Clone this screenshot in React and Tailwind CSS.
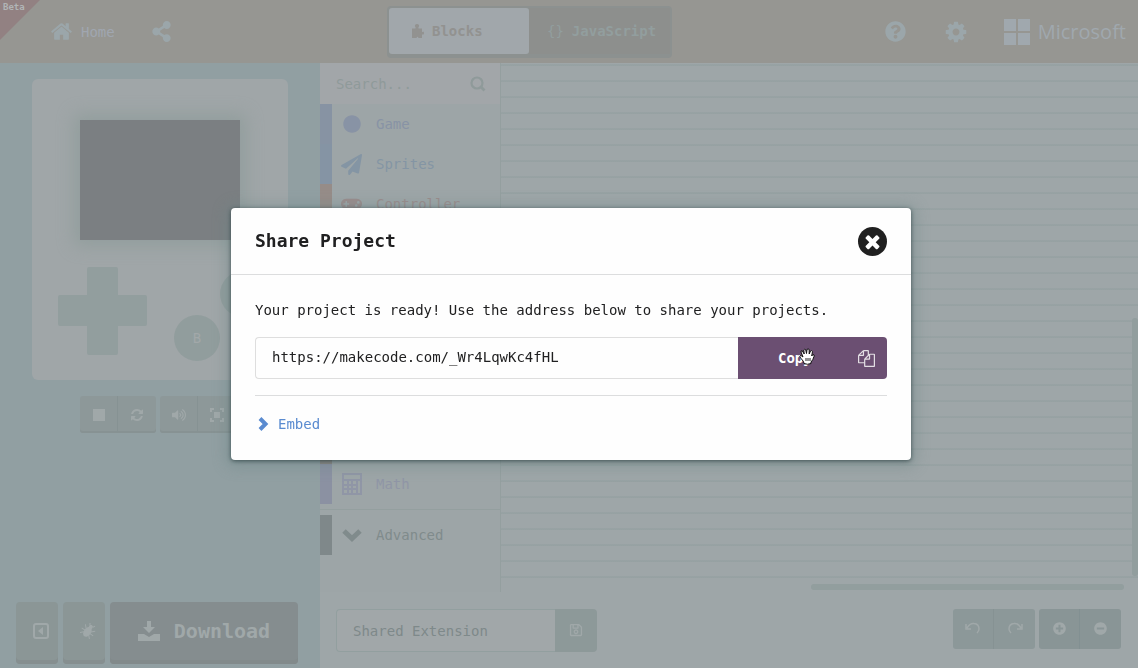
import React from "react";
import {
  FaShareAlt,
  FaQuestionCircle,
  FaCircle,
  FaPaperPlane,
  FaGamepad,
  FaVolumeUp,
  FaPlusCircle,
  FaMinusCircle,
  FaRegSave,
} from "react-icons/fa";

const HOME =
  "M1472 992v480q0 26-19 45t-45 19h-384v-384h-256v384h-384q-26 0-45-19t-19-45v-480q0-1 .5-3t.5-3l575-474 575 474q1 2 1 6zm223-69l-62 74q-8 9-21 11h-3q-13 0-21-7l-692-577-692 577q-12 8-24 7-13-2-21-11l-62-74q-8-10-7-23.5t11-21.5l719-599q32-26 76-26t76 26l244 204v-195q0-14 9-23t23-9h192q14 0 23 9t9 23v408l219 182q10 8 11 21.5t-7 23.5z";
const COG =
  "M1152 896q0-106-75-181t-181-75-181 75-75 181 75 181 181 75 181-75 75-181zm512-109v222q0 12-8 23t-20 13l-185 28q-19 54-39 91 35 50 107 138 10 12 10 25t-9 23q-27 37-99 108t-94 71q-12 0-26-9l-138-108q-44 23-91 38-16 136-29 186-7 28-36 28h-222q-14 0-24.5-8.5t-11.5-21.5l-28-184q-49-16-90-37l-141 107q-10 9-25 9-14 0-25-11-126-114-165-168-7-10-7-23 0-12 8-23 15-21 51-66.5t54-70.5q-27-50-41-99l-183-27q-13-2-21-12.5t-8-23.5v-222q0-12 8-23t19-13l186-28q14-46 39-92-40-57-107-138-10-12-10-24 0-10 9-23 26-36 98.500-107.500t94.500-71.500q13 0 26 10l138 107q44-23 91-38 16-136 29-186 7-28 36-28h222q14 0 24.500 8.500t11.500 21.500l28 184q49 16 90 37l142-107q9-9 24-9 13 0 25 10 129 119 165 170 7 8 7 22 0 12-8 23-15 21-51 66.500t-54 70.500q26 50 41 98l183 28q13 2 21 12.500t8 23.500z";
const REFRESH =
  "M1639 1056q0 5-1 7-64 268-268 434.5t-478 166.5q-146 0-282.5-55t-243.5-157l-129 129q-19 19-45 19t-45-19-19-45v-448q0-26 19-45t45-19h448q26 0 45 19t19 45-19 45l-137 137q71 66 161 102t187 36q134 0 250-65t186-179q11-17 53-117 8-23 30-23h192q13 0 22.5 9.5t9.5 22.5zm25-800v448q0 26-19 45t-45 19h-448q-26 0-45-19t-19-45 19-45l138-138q-148-137-349-137-134 0-250 65t-186 179q-11 17-53 117-8 23-30 23h-199q-13 0-22.5-9.5t-9.5-22.5v-7q65-268 270-434.5t480-166.5q146 0 284 55.5t245 156.5l130-129q19-19 45-19t45 19 19 45z";
const COPY =
  "M1696 384q40 0 68 28t28 68v1216q0 40-28 68t-68 28h-960q-40 0-68-28t-28-68v-288h-544q-40 0-68-28t-28-68v-672q0-40 20-88t48-76l408-408q28-28 76-48t88-20h416q40 0 68 28t28 68v328q68-40 128-40h416zm-544 213l-299 299h299v-299zm-640-384l-299 299h299v-299zm196 647l316-316v-416h-384v416q0 40-28 68t-68 28h-416v640h512v-256q0-40 20-88t48-76zm956 804v-1152h-384v416q0 40-28 68t-68 28h-416v640h896z";
const TIMES =
  "M1490 1322q0 40-28 68l-136 136q-28 28-68 28t-68-28l-294-294-294 294q-28 28-68 28t-68-28l-136-136q-28-28-28-68t28-68l294-294-294-294q-28-28-28-68t28-68l136-136q28-28 68-28t68 28l294 294 294-294q28-28 68-28t68 28l136 136q28 28 28 68t-28 68l-294 294 294 294q28 28 28 68z";

function Glyph({ d, className }) {
  return (
    <svg viewBox="0 0 1792 1792" fill="currentColor" className={className} aria-hidden="true">
      <path d={d} />
    </svg>
  );
}

function Header() {
  return (
    <header className="relative flex h-[63px] shrink-0 items-center justify-between bg-[#969692] text-[#9ba6aa]">
      <div className="flex items-center pl-[50px]">
        <svg className="absolute left-0 top-0 size-10" viewBox="0 0 40 40" aria-hidden="true">
          <path d="M0 0H40L0 40Z" fill="#928182" />
        </svg>
        <span className="absolute left-[3px] top-0 text-[9px] leading-[14px] font-bold text-[#b1b5b6]">Beta</span>
        <a href="#home" className="flex items-center gap-2">
          <Glyph d={HOME} className="size-[23px]" />
          <span className="text-[#a0a6b0]">Home</span>
        </a>
        <button aria-label="Share" className="ml-9">
          <FaShareAlt className="size-[21px]" />
        </button>
      </div>
      <div className="absolute inset-y-0 left-[387px] flex items-center">
        <div className="flex h-[52px] rounded-sm bg-[#8c9190] p-[2px] pb-1">
          <button className="flex w-[140px] items-center gap-2 rounded-[3px] bg-[#a1a7ab] pl-[22px] text-[#929290] font-bold">
            <svg viewBox="0 0 13 16" className="h-4 w-[13px]" fill="currentColor" aria-hidden="true">
              <path d="M1 5.500H4.500Q5 4.500 4 3.500Q3.500 1 6 1Q8.500 1 8 3.500Q7 4.500 7.500 5.500H11V8.500Q11.500 9.500 12.300 8.500Q13 8.500 13 10Q13 11.800 12.300 11.600Q11.500 10.800 11 12V15H7.500Q6.500 12.500 5.500 15H1Z" />
            </svg>
            Blocks
          </button>
          <button className="flex w-[141px] items-center gap-2 bg-[#8d8f8d] pl-[18px] text-[#929e9e] font-bold">
            <span className="font-normal" aria-hidden="true">{"{}"}</span>
            JavaScript
          </button>
        </div>
      </div>
      <div className="flex items-center pr-3">
        <button aria-label="Help">
          <FaQuestionCircle className="size-[21px]" />
        </button>
        <button aria-label="Settings" className="ml-[38px]">
          <Glyph d={COG} className="size-6" />
        </button>
        <div className="ml-9 flex items-center gap-2 text-[#a0a8ae]">
          <svg viewBox="0 0 26 26" className="size-[26px]" fill="currentColor" aria-hidden="true">
            <path d="M0 0h12v12H0zM14 0h12v12H14zM0 14h12v12H0zM14 14h12v12H14z" />
          </svg>
          <span className="font-['Open_Sans',sans-serif] text-[20px] leading-6 font-medium">Microsoft</span>
        </div>
      </div>
    </header>
  );
}

const simButton = "flex h-[37px] w-[38px] items-center justify-center text-[#a0a8a9]";

function Simulator() {
  return (
    <aside className="flex w-80 shrink-0 flex-col justify-between bg-[#919fa2] px-4 pt-4 pb-1">
      <div className="flex flex-col gap-4 px-4">
        <div className="h-[301px] rounded-md bg-[#a0a6a8] px-[26px] pt-[41px]">
          <div className="mx-[22px] h-[120px] bg-[#7b7f82] shadow-[0_0_16px_6px_#929e9d]" />
          <div className="flex items-start pt-[27px]">
            <svg viewBox="0 0 89 88" className="h-[88px] w-[89px] shrink-0" fill="#929e9e" aria-hidden="true">
              <path d="M31 0H58Q60 0 60 2V28H87Q89 28 89 30V57Q89 59 87 59H60V86Q60 88 58 88H31Q29 88 29 86V59H2Q0 59 0 57V30Q0 28 2 28H29V2Q29 0 31 0Z" />
            </svg>
            <div className="ml-[27px] mt-12 flex size-[46px] shrink-0 items-center justify-center rounded-full bg-[#919d9d] text-[#a2a8a9]">
              B
            </div>
            <div className="mt-1 size-[46px] shrink-0 rounded-full bg-[#919d9d]" />
          </div>
        </div>
        <div className="flex gap-1 pl-12">
          <div className="flex divide-x divide-[#869293] rounded-[3px] bg-[#8d9899] shadow-[inset_0_-2px_#879293]">
            <button aria-label="Stop" className={simButton}>
              <span className="size-3 bg-current" />
            </button>
            <button aria-label="Restart" className={simButton}>
              <Glyph d={REFRESH} className="size-[14px]" />
            </button>
          </div>
          <div className="flex divide-x divide-[#869293] rounded-[3px] bg-[#8d9899] shadow-[inset_0_-2px_#879293]">
            <button aria-label="Mute" className={simButton}>
              <FaVolumeUp className="size-[14px]" />
            </button>
            <button aria-label="Full screen" className={simButton}>
              <svg viewBox="0 0 14 14" className="size-[14px]" fill="none" stroke="currentColor" strokeWidth="2" aria-hidden="true">
                <path d="M1 4V1h3M10 1h3v3M13 10v3h-3M4 13H1v-3" />
                <path d="M4 4h6v6H4z" fill="currentColor" stroke="none" />
              </svg>
            </button>
          </div>
        </div>
      </div>
      <div className="flex h-[62px] gap-[5px] pr-1.5 text-[#a0a8a9]">
        <button aria-label="Collapse simulator" className="flex w-[42px] items-center justify-center rounded bg-[#8b9696] pl-2 pb-1 shadow-[inset_0_-4px_#868f90]">
          <svg viewBox="0 0 16 16" className="size-4" fill="none" stroke="currentColor" strokeWidth="2" aria-hidden="true">
            <rect x="1" y="1" width="14" height="14" rx="2" />
            <path d="M10 4v8L5 8z" fill="currentColor" stroke="none" />
          </svg>
        </button>
        <button aria-label="Debug" className="flex w-[42px] items-center justify-center rounded bg-[#8b9696] pl-2 pb-1 shadow-[inset_0_-4px_#868f90]">
          <svg viewBox="0 0 16 16" className="size-4" fill="currentColor" aria-hidden="true">
            <g transform="rotate(35 8 8)">
              <ellipse cx="8" cy="9" rx="3.6" ry="5.5" />
              <circle cx="8" cy="3" r="2" />
              <path d="M2 4l3 3M14 4l-3 3M1 9h14M2 14l3-3M14 14l-3-3M6 2L5 0M10 2l1-2" stroke="currentColor" strokeWidth="1" />
            </g>
          </svg>
        </button>
        <button className="flex flex-1 items-center justify-center gap-[14px] rounded bg-[#858d8f] pb-1 text-[20px] font-bold shadow-[inset_0_-4px_#828a8b]">
          <svg viewBox="0 0 22 20" className="h-5 w-[22px]" fill="currentColor" aria-hidden="true">
            <path d="M9 0h4v6h4l-6 6-6-6h4zM0 13h6l5 3 5-3h6v7H0z" />
          </svg>
          Download
        </button>
      </div>
    </aside>
  );
}

function Category({ bar, text, icon, children }) {
  return (
    <li className="flex h-10 items-center">
      <span className={"h-10 w-3 shrink-0 " + bar} />
      <a href={"#" + children} className={"flex items-center gap-[14px] pl-[9px] " + text}>
        <span className="flex w-[21px] justify-center">{icon}</span>
        {children}
      </a>
    </li>
  );
}

function Toolbox() {
  return (
    <nav className="w-[181px] shrink-0 border-r border-[#949f9f] bg-[#9da5a7]">
      <div className="flex h-[41px] items-center justify-between bg-[#a2a6a9] pr-[14px] pl-4 text-[#8f9a9a]">
        <input
          aria-label="Search"
          placeholder="Search..."
          className="w-28 bg-transparent placeholder:text-[#8f9a9a] outline-none"
        />
        <svg viewBox="0 0 16 16" className="size-4" fill="none" stroke="currentColor" aria-hidden="true">
          <circle cx="7" cy="7" r="5.5" strokeWidth="2.2" />
          <path d="M11 11l3.500 3.500" strokeWidth="2.800" />
        </svg>
      </div>
      <ul>
        <Category bar="bg-[#8793a3]" text="text-[#8893a5]" icon={<FaCircle className="size-[18px]" />}>
          Game
        </Category>
        <Category bar="bg-[#8594a4]" text="text-[#8495a4]" icon={<FaPaperPlane className="size-[21px]" />}>
          Sprites
        </Category>
        <Category bar="bg-[#968c88]" text="text-[#9a8c8c]" icon={<FaGamepad className="size-[22px]" />}>
          Controller
        </Category>
        <li className="h-[240px] w-3 bg-[#8d8681]" aria-hidden="true" />
        <Category
          bar="bg-[#8b91a2]"
          text="text-[#9096a6]"
          icon={
            <svg viewBox="0 0 20 22" className="h-[22px] w-5" fill="none" stroke="currentColor" strokeWidth="2" aria-hidden="true">
              <path d="M1 1h18v20H1zM1 7h18M1 12h14M1 16h14M6 7v14M10 7v14M15 7v14" />
            </svg>
          }
        >
          Math
        </Category>
        <li className="mt-[5px] mb-[5px] border-t border-[#949f9f]" aria-hidden="true" />
        <Category
          bar="bg-[#7f888a]"
          text="text-[#808b8c]"
          icon={
            <svg viewBox="0 0 20 14" className="h-[14px] w-5" fill="none" stroke="currentColor" strokeWidth="5" aria-hidden="true">
              <path d="M2 3l8 7.500L18 3" />
            </svg>
          }
        >
          Advanced
        </Category>
      </ul>
    </nav>
  );
}

function Workspace() {
  return (
    <div className="relative min-w-0 flex-1 bg-[#9ea6a8] bg-[linear-gradient(transparent_1px,#98a2a4_1px,#96a1a2_3px,transparent_3px)] bg-[size:16px_16px]">
      <div className="absolute right-0 top-[255px] bottom-4 w-1.5 rounded bg-[#929e9e]" />
      <div className="absolute right-[14px] bottom-0.5 h-1.5 w-[313px] rounded bg-[#929e9e]" />
    </div>
  );
}

const toolButton = "flex h-10 w-[41px] items-center justify-center pb-0.5 text-[#a0a8a9]";

function Arc({ flip }) {
  return (
    <svg viewBox="0 0 16 12" className={"h-3 w-4 " + (flip ? "-scale-x-100" : "")} fill="none" stroke="currentColor" strokeWidth="1.5" aria-hidden="true">
      <path d="M2 6Q5 1 9 1.500Q14 2 14 7Q14 9 12 11M1 2V7H6" />
    </svg>
  );
}

function EditorTools() {
  return (
    <footer className="flex h-[76px] shrink-0 items-start justify-between bg-[#9ea6a8] pt-[17px] pr-[17px] pl-4">
      <div className="flex h-[43px]">
        <input
          aria-label="Project name"
          defaultValue="Shared Extension"
          className="w-[219px] rounded-l border border-r-0 border-[#929f9f] bg-[#a1a7a9] px-4 text-[#7e898a] outline-none"
        />
        <button aria-label="Save" className="flex w-[42px] items-center justify-center rounded-r bg-[#8d9999] pb-0.5 text-[#a0a8a9]">
          <FaRegSave className="size-[14px]" />
        </button>
      </div>
      <div className="flex gap-1">
        <div className="flex divide-x divide-[#869293] rounded-[3px] bg-[#8c9899]">
          <button aria-label="Undo" className={toolButton}>
            <Arc />
          </button>
          <button aria-label="Redo" className={toolButton}>
            <Arc flip />
          </button>
        </div>
        <div className="flex divide-x divide-[#829092] rounded-[3px] bg-[#899596]">
          <button aria-label="Zoom in" className={toolButton}>
            <FaPlusCircle className="size-[13px]" />
          </button>
          <button aria-label="Zoom out" className={toolButton}>
            <FaMinusCircle className="size-[13px]" />
          </button>
        </div>
      </div>
    </footer>
  );
}

function ShareDialog() {
  return (
    <div className="fixed inset-0 flex items-center justify-center pl-1">
      <section
        role="dialog"
        aria-labelledby="share-title"
        className="w-[680px] max-w-full rounded-[4px] bg-[#fefefe] text-[#202021] shadow-[0_1px_4px_0_rgba(30,50,52,0.7),0_2px_14px_5px_rgba(105,132,132,0.4)]"
      >
        <div className="flex h-[67px] items-center justify-between border-b border-[#dcddde] px-6">
          <h1 id="share-title" className="text-[18px] leading-6 font-bold">
            Share Project
          </h1>
          <button aria-label="Close" className="flex size-[29px] items-center justify-center rounded-full bg-[#202020] text-white">
            <Glyph d={TIMES} className="size-[21px]" />
          </button>
        </div>
        <div className="p-6">
          <label htmlFor="share-url" className="block leading-[22px]">
            Your project is ready! Use the address below to share your projects.
          </label>
          <div className="mt-4 flex h-[42px]">
            <input
              id="share-url"
              readOnly
              value="https://makecode.com/_Wr4LqwKc4fHL"
              className="min-w-0 flex-1 rounded-l border border-r-0 border-[#dedede] px-4 pb-0.5 outline-none"
            />
            <button className="relative flex w-[149px] items-center justify-between rounded-r bg-[#6b4f72] pr-3 pl-10 font-bold text-white">
              Copy
              <Glyph d={COPY} className="size-[17px] text-[#e3dfe4]" />
              <svg viewBox="0 0 16 17" className="absolute left-[61px] top-[11px] h-[17px] w-4" aria-hidden="true">
                <path
                  d="M5 15.500L4.500 13.500Q2 10.500 .8 8.800Q.5 7.500 2 7.500L4 9L2 4Q1.800 2.500 3.200 2.700L5.200 6L4.800 2Q5.500 .7 6.700 1.700L7.500 5.500L8 1.500Q9 .3 10.200 1.500V6L11.500 3Q13 2 13.500 3.500L12.700 8L14 6.500Q15.700 6.500 15 8.500Q14 12 12 14V15.500Q8.500 17 5 15.500Z"
                  fill="#fff"
                  stroke="#111"
                  strokeWidth="1"
                />
                <path d="M7 10v3M9 10v3M11 10v3" stroke="#222" strokeWidth="1" />
              </svg>
            </button>
          </div>
          <div className="mt-4 border-t border-[#dcddde] pt-4">
            <button className="flex items-center gap-[9px] pl-[3px] leading-6 text-[#5a8bd0]">
              <svg viewBox="0 0 11 14" className="h-[14px] w-[11px]" fill="none" stroke="currentColor" strokeWidth="4" aria-hidden="true">
                <path d="M2 1.500L7.500 7L2 12.500" />
              </svg>
              Embed
            </button>
          </div>
        </div>
      </section>
    </div>
  );
}

export default function App() {
  return (
    <div className="flex min-h-screen flex-col bg-[#9ea6a8] font-['DejaVu_Sans_Mono',monospace] text-[14px] leading-5">
      <Header />
      <main className="flex flex-1">
        <Simulator />
        <div className="flex min-w-0 flex-1 flex-col">
          <div className="flex flex-1">
            <Toolbox />
            <Workspace />
          </div>
          <EditorTools />
        </div>
      </main>
      <ShareDialog />
    </div>
  );
}
